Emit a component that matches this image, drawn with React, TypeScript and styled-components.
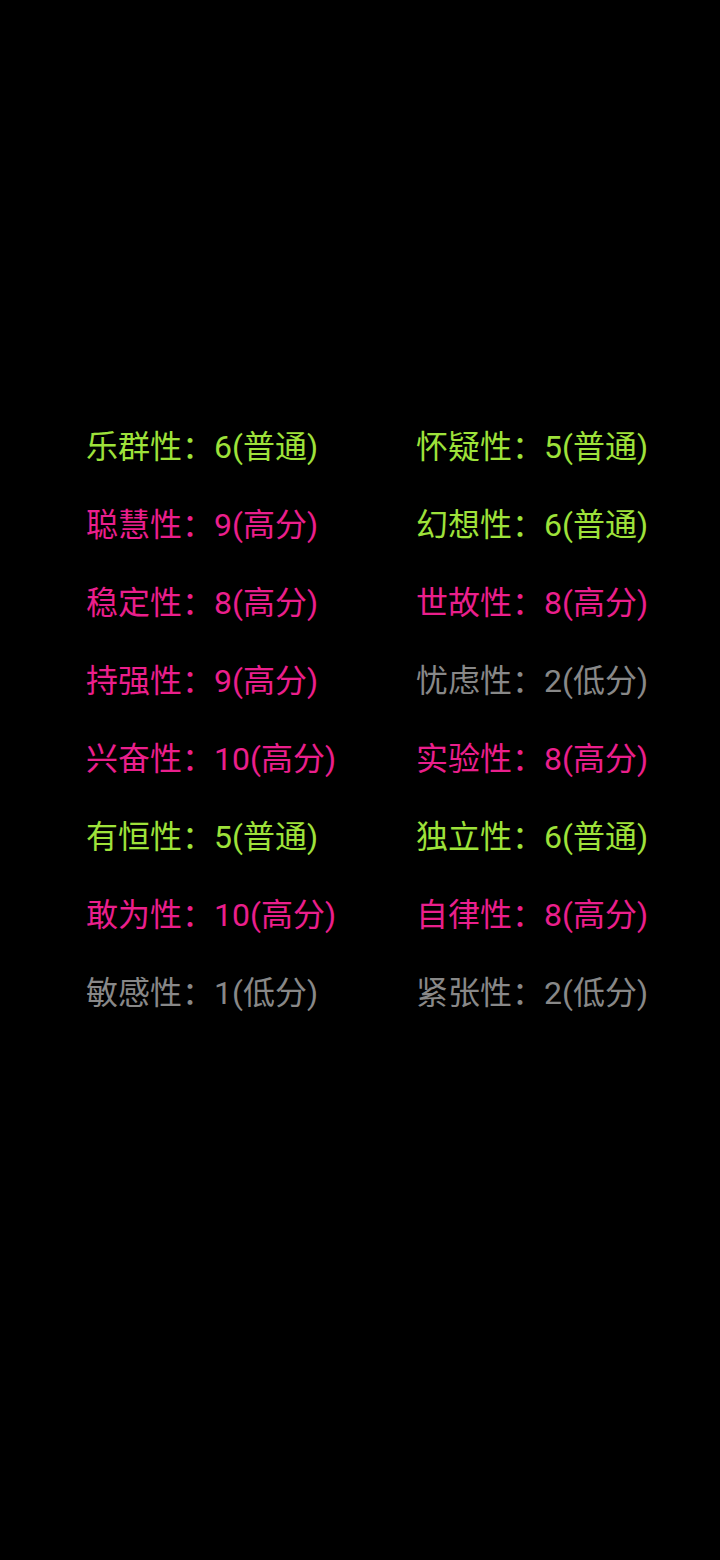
import React from "react";
import styled, { createGlobalStyle } from "styled-components";

const Global = createGlobalStyle`
  html, body { margin: 0; padding: 0; background: #000; }
  body { width: 720px; height: 1560px; overflow: hidden; }
`;

const Page = styled.div`
  width: 720px;
  height: 1560px;
  background: #000;
  display: flex;
  flex-direction: column;
  padding-top: 426px;
  box-sizing: border-box;
`;

const Grid = styled.div`
  display: grid;
  grid-template-columns: 330px 304px;
  padding-left: 86px;
  row-gap: 36px;
`;

type Level = "high" | "mid" | "low";

const colors: Record<Level, string> = {
  high: "#ea1f8c",
  mid: "#9ee23a",
  low: "#888888",
};

const Item = styled.div<{ $level: Level }>`
  font-family: Roboto, "Noto Sans CJK SC", sans-serif;
  font-size: 32px;
  line-height: 42px;
  height: 42px;
  white-space: nowrap;
  color: ${(p) => colors[p.$level]};
`;

const data: [string, number, Level][] = [
  ["乐群性", 6, "mid"],
  ["怀疑性", 5, "mid"],
  ["聪慧性", 9, "high"],
  ["幻想性", 6, "mid"],
  ["稳定性", 8, "high"],
  ["世故性", 8, "high"],
  ["持强性", 9, "high"],
  ["忧虑性", 2, "low"],
  ["兴奋性", 10, "high"],
  ["实验性", 8, "high"],
  ["有恒性", 5, "mid"],
  ["独立性", 6, "mid"],
  ["敢为性", 10, "high"],
  ["自律性", 8, "high"],
  ["敏感性", 1, "low"],
  ["紧张性", 2, "low"],
];

const label: Record<Level, string> = { high: "高分", mid: "普通", low: "低分" };

export default function App() {
  return (
    <>
      <Global />
      <Page>
        <Grid>
          {data.map(([name, v, lvl]) => (
            <Item key={name} $level={lvl}>
              {name}：{v}({label[lvl]})
            </Item>
          ))}
        </Grid>
      </Page>
    </>
  );
}
